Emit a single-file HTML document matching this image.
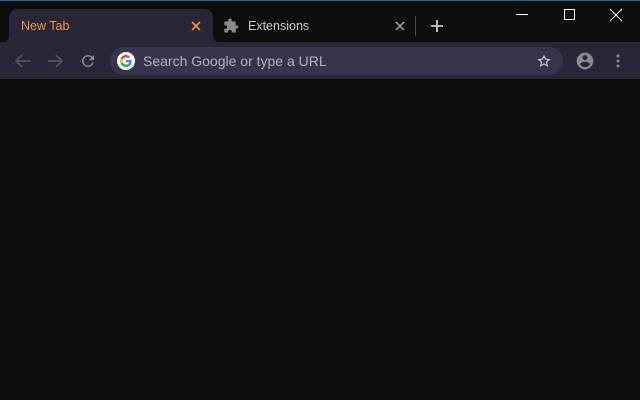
<!DOCTYPE html>
<html><head><meta charset="utf-8"><style>
*{margin:0;padding:0;box-sizing:border-box}
body{width:640px;height:400px;background:#100c0e;overflow:hidden;position:relative;font-family:"Liberation Sans",Arial,sans-serif}
.frame{position:absolute;left:0;top:0;width:640px;height:42px;background:#0f0c0e;border-top:1px solid #1c6fa0}
.tab{position:absolute;left:9px;top:9px;width:204px;height:34px;background:#292637;border-radius:8px 8px 0 0}
.tab:before,.tab:after{content:"";position:absolute;bottom:0;width:8px;height:8px;background:transparent}
.tab:before{left:-8px;border-bottom-right-radius:8px;box-shadow:4px 4px 0 4px #292637}
.tab:after{right:-8px;border-bottom-left-radius:8px;box-shadow:-4px 4px 0 4px #292637}
.toolbar{position:absolute;left:0;top:42px;width:640px;height:37px;background:#292637}
.omni{position:absolute;left:110px;top:47px;width:453px;height:28px;background:#37354c;border-radius:14px}
.t{position:absolute;font-size:12.5px}
svg{position:absolute}
</style></head><body>
<div class="frame"></div>
<div class="toolbar"></div>
<div class="tab"></div>
<div class="t" style="left:21px;top:19px;color:#f2953a">New Tab</div>
<svg style="left:190px;top:20px" width="12" height="12"><path d="M2 2L10 10M10 2L2 10" stroke="#f2953a" stroke-width="1.6"/></svg>
<svg style="left:223px;top:18px" width="16" height="16" viewBox="0 0 24 24"><path fill="#8a8a8a" d="M20.5 11H19V7a2 2 0 0 0-2-2h-4V3.5a2.5 2.5 0 0 0-5 0V5H4a2 2 0 0 0-2 2v3.8h1.5a2.7 2.7 0 0 1 0 5.4H2V20a2 2 0 0 0 2 2h3.8v-1.5a2.7 2.7 0 0 1 5.4 0V22H17a2 2 0 0 0 2-2v-4h1.5a2.5 2.5 0 0 0 0-5z"/></svg>
<div class="t" style="left:248px;top:19px;color:#c8c8cc">Extensions</div>
<svg style="left:395px;top:21px" width="10" height="10"><path d="M1 1L9 9M9 1L1 9" stroke="#a0a0a4" stroke-width="1.5"/></svg>
<div style="position:absolute;left:415px;top:16px;width:1px;height:20px;background:#4a4a4e"></div>
<svg style="left:430px;top:19px" width="14" height="14"><path d="M7 1V13M1 7H13" stroke="#c8c8cc" stroke-width="1.8"/></svg>
<svg style="left:515px;top:9px" width="14" height="10"><path d="M1 5.5H13" stroke="#fff" stroke-width="1"/></svg>
<svg style="left:564px;top:9px" width="12" height="12"><rect x="0.5" y="0.5" width="10" height="10" fill="none" stroke="#fff"/></svg>
<svg style="left:609px;top:8px" width="14" height="14"><path d="M1 1L13 13M13 1L1 13" stroke="#fff" stroke-width="1.1"/></svg>
<svg style="left:14px;top:53px" width="18" height="16" viewBox="0 0 18 16"><path d="M16 8H3M8 2L2 8L8 14" fill="none" stroke="#55525f" stroke-width="1.8"/></svg>
<svg style="left:46px;top:53px" width="18" height="16" viewBox="0 0 18 16"><path d="M2 8H15M10 2L16 8L10 14" fill="none" stroke="#55525f" stroke-width="1.8"/></svg>
<svg style="left:79px;top:52px" width="18" height="18" viewBox="0 0 24 24"><path fill="#8a8a8e" d="M17.65 6.35A7.96 7.96 0 0 0 12 4a8 8 0 1 0 7.73 10h-2.08A6 6 0 1 1 12 6c1.66 0 3.14.69 4.22 1.78L13 11h7V4l-2.35 2.35z"/></svg>
<div class="omni"></div>
<div style="position:absolute;left:117px;top:52px;width:18px;height:18px;border-radius:50%;background:#fff"></div>
<svg style="left:120px;top:55px" width="12" height="12" viewBox="0 0 48 48"><path fill="#EA4335" d="M24 9.5c3.5 0 6.6 1.2 9.1 3.6l6.8-6.8C35.8 2.4 30.2 0 24 0 14.6 0 6.6 5.4 2.6 13.2l7.9 6.2C12.4 13.7 17.7 9.5 24 9.5z"/><path fill="#4285F4" d="M46.5 24.5c0-1.6-.1-3.1-.4-4.5H24v9h12.7c-.6 2.9-2.2 5.4-4.7 7.1l7.7 6c4.5-4.2 6.8-10.4 6.8-17.6z"/><path fill="#FBBC05" d="M10.5 28.6A14.5 14.5 0 0 1 9.5 24c0-1.6.3-3.2.8-4.6l-7.9-6.2A24 24 0 0 0 0 24c0 3.9.9 7.5 2.6 10.8l7.9-6.2z"/><path fill="#34A853" d="M24 48c6.5 0 11.9-2.1 15.9-5.8l-7.7-6c-2.2 1.5-5 2.3-8.2 2.3-6.3 0-11.6-4.2-13.5-9.9l-7.9 6.2C6.6 42.6 14.6 48 24 48z"/></svg>
<div class="t" style="left:143px;top:53px;font-size:14px;color:#b4b3bd">Search Google or type a URL</div>
<svg style="left:536px;top:53px" width="16" height="16" viewBox="0 0 24 24"><path fill="#d0d0d4" d="M22 9.24l-7.19-.62L12 2 9.19 8.63 2 9.24l5.46 4.73L5.82 21 12 17.27 18.18 21l-1.63-7.03L22 9.24zM12 15.4l-3.76 2.27 1-4.28-3.32-2.880 4.38-.38L12 6.1l1.71 4.04 4.38.38-3.32 2.88 1 4.28L12 15.4z"/></svg>
<svg style="left:575px;top:51px" width="20" height="20" viewBox="0 0 24 24"><path fill="#8a8a8e" d="M12 2a10 10 0 1 0 0 20 10 10 0 0 0 0-20zm0 3a3 3 0 1 1 0 6 3 3 0 0 1 0-6zm0 14.2a7.2 7.2 0 0 1-6-3.22c.03-1.990 4-3.080 6-3.080s5.970 1.090 6 3.080a7.2 7.2 0 0 1-6 3.22z"/></svg>
<svg style="left:615px;top:53px" width="6" height="16"><circle cx="3" cy="3" r="1.5" fill="#8a8a8e"/><circle cx="3" cy="8" r="1.5" fill="#8a8a8e"/><circle cx="3" cy="13" r="1.5" fill="#8a8a8e"/></svg>
</body></html>
